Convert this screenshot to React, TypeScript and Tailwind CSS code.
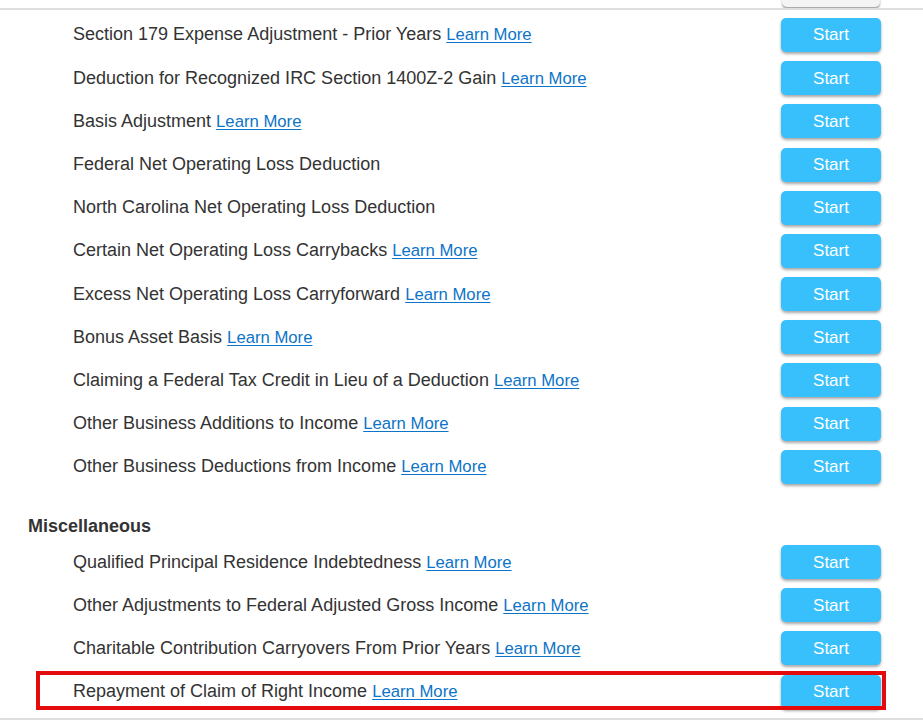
import React from "react";

type Row = { label: string; learn?: boolean };

const rows1: Row[] = [
  { label: "Section 179 Expense Adjustment - Prior Years", learn: true },
  { label: "Deduction for Recognized IRC Section 1400Z-2 Gain", learn: true },
  { label: "Basis Adjustment", learn: true },
  { label: "Federal Net Operating Loss Deduction" },
  { label: "North Carolina Net Operating Loss Deduction" },
  { label: "Certain Net Operating Loss Carrybacks", learn: true },
  { label: "Excess Net Operating Loss Carryforward", learn: true },
  { label: "Bonus Asset Basis", learn: true },
  { label: "Claiming a Federal Tax Credit in Lieu of a Deduction", learn: true },
  { label: "Other Business Additions to Income", learn: true },
  { label: "Other Business Deductions from Income", learn: true },
];

const rows2: Row[] = [
  { label: "Qualified Principal Residence Indebtedness", learn: true },
  { label: "Other Adjustments to Federal Adjusted Gross Income", learn: true },
  { label: "Charitable Contribution Carryovers From Prior Years", learn: true },
];

function StartButton() {
  return (
    <button className="w-[100px] h-[34px] rounded-[5px] bg-[#38c0fc] text-white text-[17px] leading-none shadow-[0_2px_3px_rgba(0,0,0,0.35)]">
      Start
    </button>
  );
}

function ItemRow({ row, highlight }: { row: Row; highlight?: boolean }) {
  return (
    <div className="relative h-[43.2px] flex items-center">
      <div className="flex-1 pl-[73px] text-[18px] text-[#333333] whitespace-nowrap">
        {row.label}
        {row.learn && (
          <>
            {" "}
            <a className="text-[16.7px] text-[#0d74c8] underline underline-offset-2">Learn More</a>
          </>
        )}
      </div>
      <div className="w-[142px] shrink-0">
        <StartButton />
      </div>
      {highlight && (
        <div className="absolute left-[36px] top-[0.6px] w-[850px] h-[39px] border-4 border-[#e30b0b] pointer-events-none" />
      )}
    </div>
  );
}

export default function App() {
  return (
    <div
      className="w-[923px] h-[720px] bg-white overflow-hidden"
      style={{ fontFamily: '"Liberation Sans", Arial, sans-serif' }}
    >
      <div className="h-[8px] overflow-hidden relative">
        <div className="absolute left-[782px] bottom-[1px] w-[98px] h-[20px] rounded-[5px] bg-[#f4f4f4] shadow-[0_2px_2px_rgba(0,0,0,0.35)]" />
      </div>
      <div className="h-[2px] bg-[#dedede]" />
      <div className="pt-[3.4px]">
        {rows1.map((r) => (
          <ItemRow key={r.label} row={r} />
        ))}
        <div className="pt-[26px] pl-[28px] h-[52px] text-[18px] font-bold text-[#333333] leading-[24px]">
          Miscellaneous
        </div>
        {rows2.map((r) => (
          <ItemRow key={r.label} row={r} />
        ))}
        <ItemRow row={{ label: "Repayment of Claim of Right Income", learn: true }} highlight />
      </div>
      <div className="mt-[5px] h-[2px] bg-[#dedede]" />
    </div>
  );
}
